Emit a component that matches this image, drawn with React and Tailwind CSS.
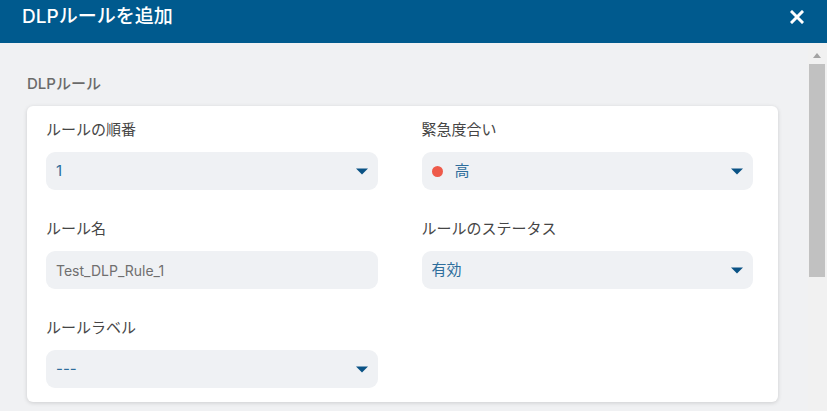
import React from "react";

const font = { fontFamily: '"Inter", "Noto Sans CJK JP", sans-serif' };

function Caret() {
  return (
    <svg width="12" height="7" viewBox="0 0 12 7" className="shrink-0">
      <path d="M0 0.5H12L6 6.5Z" fill="#0a5285" />
    </svg>
  );
}

function Field({ label, children }) {
  return (
    <div>
      <div className="text-[15px] leading-[22px] text-[#454545]">{label}</div>
      <div className="mt-[11px]">{children}</div>
    </div>
  );
}

function Select({ children }) {
  return (
    <div className="flex h-[38px] items-center justify-between rounded-[9px] bg-[#eff1f4] pl-[10px] pr-[10px]">
      <div className="flex items-center text-[15px] text-[#2d6d9c]">{children}</div>
      <Caret />
    </div>
  );
}

export default function App() {
  return (
    <div className="flex h-[411px] w-[827px] flex-col overflow-hidden bg-[#f0f1f3]" style={font}>

      {/* Header */}
      <div className="flex h-[43px] shrink-0 items-start justify-between bg-[#005a8e] pl-[22px] pr-[23px] pt-[5px]">
        <h1 className="text-[19px] font-medium leading-[24px] text-white">DLPルールを追加</h1>
        <svg width="14" height="14" viewBox="0 0 14 14" className="mt-[5px]">
          <path d="M2 2L12 12M12 2L2 12" stroke="#fff" strokeWidth="3" strokeLinecap="square" />
        </svg>
      </div>

      {/* Body */}
      <div className="flex flex-1">
        <div className="flex-1 pl-[27px] pr-[30px] pt-[30px]">
          <h2 className="text-[15px] font-medium leading-[22px] text-[#6a6a6a]">DLPルール</h2>

          <div className="mt-[11px] rounded-[6px] bg-white pb-[14px] pl-[19px] pr-[25px] pt-[13px] shadow-[0_1px_4px_rgba(0,0,0,0.15)]">
            <div className="grid grid-cols-2 gap-x-[44px] gap-y-[28px]">
              <Field label="ルールの順番">
                <Select>1</Select>
              </Field>
              <Field label="緊急度合い">
                <Select>
                  <span className="mr-[12px] h-[11px] w-[11px] rounded-full bg-[#ee5a4a]"></span>
                  高
                </Select>
              </Field>
              <Field label="ルール名">
                <div className="flex h-[38px] items-center rounded-[9px] bg-[#eff1f4] pl-[10px] text-[14px] text-[#6f6f6f]">
                  Test_DLP_Rule_1
                </div>
              </Field>
              <Field label="ルールのステータス">
                <Select>有効</Select>
              </Field>
              <Field label="ルールラベル">
                <Select>---</Select>
              </Field>
            </div>
          </div>
        </div>

        {/* Scrollbar */}
        <div className="flex w-[19px] shrink-0 flex-col items-center bg-[#f1f1f1] pr-[2px] pt-[10px]">
          <svg width="8" height="5" viewBox="0 0 8 5">
            <path d="M0 5L4 0L8 5Z" fill="#a3a3a3" />
          </svg>
          <div className="mt-[6px] h-[213px] w-[16px] bg-[#c1c1c1]"></div>
        </div>
      </div>

    </div>
  );
}
